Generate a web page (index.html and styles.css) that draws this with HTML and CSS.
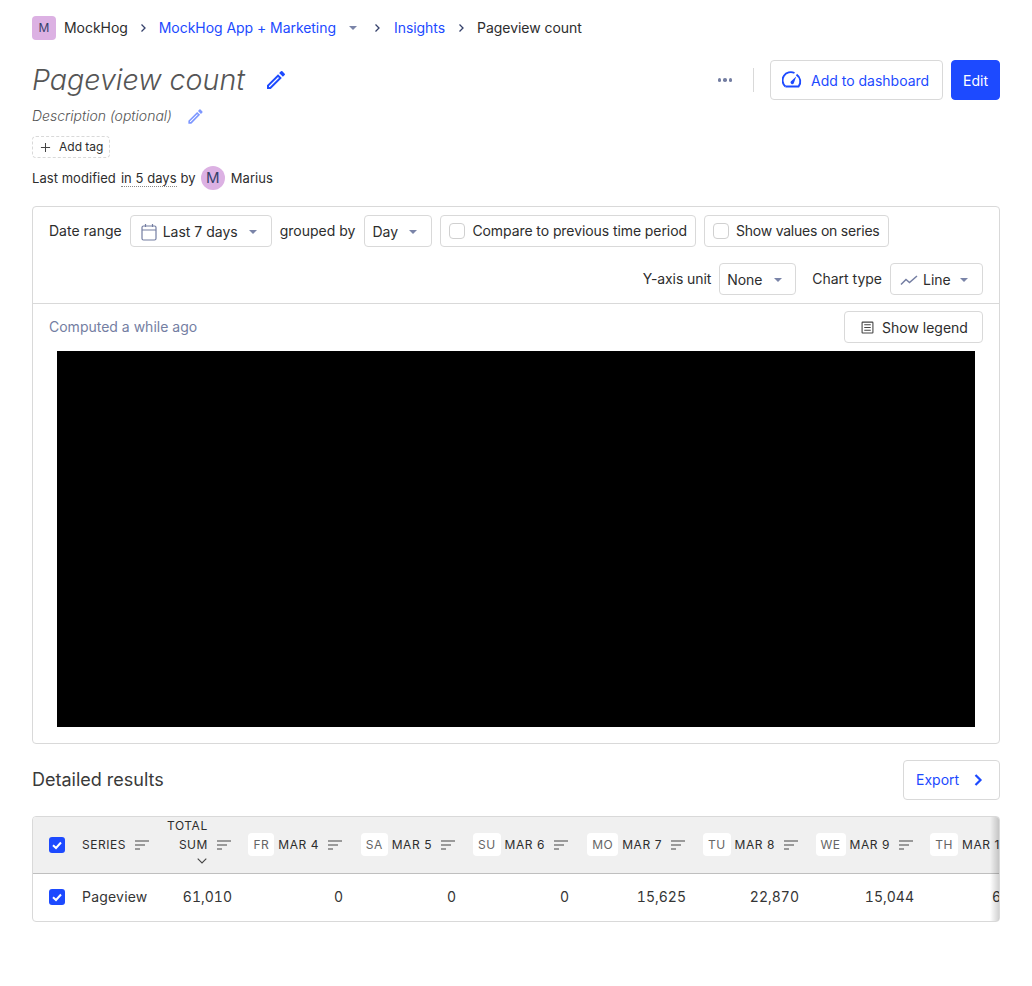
FILE: index.html
```html
<!DOCTYPE html>
<html lang="en">
<head>
<meta charset="utf-8">
<title>Pageview count</title>
<link rel="stylesheet" href="styles.css">
</head>
<body>
<nav class="crumbs">
  <span class="org-badge">M</span>
  <span class="crumb-text org-name">MockHog</span>
  <svg class="chev" viewBox="0 0 8 10"><path d="M2.500 1.500 6 5 2.500 8.500"/></svg>
  <a class="crumb-link">MockHog App + Marketing</a>
  <span class="caret project-caret"></span>
  <svg class="chev chev-wide" viewBox="0 0 8 10"><path d="M2.500 1.500 6 5 2.500 8.500"/></svg>
  <a class="crumb-link">Insights</a>
  <svg class="chev" viewBox="0 0 8 10"><path d="M2.500 1.500 6 5 2.500 8.500"/></svg>
  <span class="crumb-text">Pageview count</span>
</nav>

<header class="title-row">
  <div class="title-left">
    <h1 class="title">Pageview count</h1>
    <svg class="pencil" viewBox="0 0 24 24"><path d="M3 17.250V21h3.750L17.810 9.940l-3.750-3.750L3 17.250zM5.920 19H5v-.92l9.060-9.060.92.92L5.920 19zM20.710 7.040a1 1 0 0 0 0-1.410l-2.340-2.340a1 1 0 0 0-1.410 0l-1.830 1.830 3.750 3.750 1.830-1.830z"/></svg>
  </div>
  <div class="title-actions">
    <span class="more"><i></i><i></i><i></i></span>
    <span class="vline"></span>
    <button class="btn btn-dash">
      <svg class="gauge" viewBox="0 0 20 20"><path d="M3.400 16.500h13.200A8.200 8.200 0 0 0 14.500 4.600"/><path d="M3.400 16.500A8.200 8.200 0 0 1 12.500 3"/><path class="gauge-needle" d="M8.800 11.500 14.200 6.500 11.800 13.300a1.700 1.700 0 0 1-3-1.800z"/></svg>
      <span>Add to dashboard</span>
    </button>
    <button class="btn btn-primary">Edit</button>
  </div>
</header>

<div class="desc-row">
  <span class="desc">Description (optional)</span>
  <svg class="pencil pencil-sm" viewBox="0 0 24 24"><path d="M3 17.250V21h3.750L17.810 9.940l-3.750-3.750L3 17.250zM5.920 19H5v-.92l9.060-9.060.92.92L5.920 19zM20.710 7.040a1 1 0 0 0 0-1.410l-2.340-2.340a1 1 0 0 0-1.410 0l-1.830 1.830 3.750 3.750 1.830-1.830z"/></svg>
</div>

<div class="tag"><svg class="plus" viewBox="0 0 12 12"><path d="M6 1v10M1 6h10"/></svg>Add tag</div>

<div class="modified">
  <span>Last modified</span>
  <span class="dotted">in 5 days</span>
  <span>by</span>
  <span class="avatar">M</span>
  <span class="modified-name">Marius</span>
</div>

<section class="card">
  <div class="filters">
    <div class="filter-row">
      <span class="label">Date range</span>
      <span class="select select-date">
        <svg class="cal" viewBox="0 0 16 18"><rect x="1" y="3" width="14" height="14" rx="1.500"/><path d="M1 7h14M4.500 1v3M11.500 1v3"/></svg>
        <span>Last 7 days</span><span class="caret"></span>
      </span>
      <span class="label label-group">grouped by</span>
      <span class="select select-day"><span>Day</span><span class="caret"></span></span>
      <span class="check-btn check-compare"><span class="box"></span>Compare to previous time period</span>
      <span class="check-btn check-values"><span class="box"></span>Show values on series</span>
    </div>
    <div class="filter-row filter-row-end">
      <span class="label label-unit">Y-axis unit</span>
      <span class="select select-none"><span>None</span><span class="caret"></span></span>
      <span class="label label-gap">Chart type</span>
      <span class="select select-line">
        <svg class="linechart" viewBox="0 0 18 12"><path d="M1 10.500 6 5.500l3.500 3L17 2"/></svg>
        <span>Line</span><span class="caret"></span>
      </span>
    </div>
  </div>
  <div class="chart-area">
    <div class="chart-head">
      <span class="computed">Computed a while ago</span>
      <button class="btn-legend">
        <svg class="legend-ico" viewBox="0 0 12 12"><rect x="1" y="1" width="10" height="10" rx=".5"/><path d="M3 3.500h6M3 6h6M3 8.500h6"/></svg>
        <span>Show legend</span>
      </button>
    </div>
    <div class="chart-canvas"></div>
  </div>
</section>

<div class="results-head">
  <h2 class="results-title">Detailed results</h2>
  <button class="btn btn-export">Export<svg class="export-chev" viewBox="0 0 10 14"><path d="M2.500 2 7.500 7l-5 5"/></svg></button>
</div>

<div class="table-wrap">
  <table class="results">
    <colgroup>
      <col class="c-check"><col class="c-series"><col class="c-total"><col class="c-111"><col class="c-113"><col class="c-113"><col class="c-117"><col class="c-113"><col class="c-115"><col class="c-118">
    </colgroup>
    <thead>
      <tr>
        <th class="cell-check"><span class="checked"><svg viewBox="0 0 16 16"><path d="M4 8.200 7 11l5-5.500"/></svg></span></th>
        <th class="th-left"><span class="th-inner">SERIES<svg class="sort" viewBox="0 0 14 10"><path d="M0 1h14M0 5h10M0 9h5"/></svg></span></th>
        <th class="th-total">
          <span class="total-label">TOTAL</span>
          <span class="th-inner">SUM<svg class="sort" viewBox="0 0 14 10"><path d="M0 1h14M0 5h10M0 9h5"/></svg></span>
          <svg class="down" viewBox="0 0 10 6"><path d="M.7.700 5 5 9.300.700"/></svg>
        </th>
        <th><span class="th-inner"><span class="day">FR</span>MAR 4<svg class="sort" viewBox="0 0 14 10"><path d="M0 1h14M0 5h10M0 9h5"/></svg></span></th>
        <th><span class="th-inner"><span class="day">SA</span>MAR 5<svg class="sort" viewBox="0 0 14 10"><path d="M0 1h14M0 5h10M0 9h5"/></svg></span></th>
        <th><span class="th-inner"><span class="day">SU</span>MAR 6<svg class="sort" viewBox="0 0 14 10"><path d="M0 1h14M0 5h10M0 9h5"/></svg></span></th>
        <th><span class="th-inner"><span class="day">MO</span>MAR 7<svg class="sort" viewBox="0 0 14 10"><path d="M0 1h14M0 5h10M0 9h5"/></svg></span></th>
        <th><span class="th-inner"><span class="day">TU</span>MAR 8<svg class="sort" viewBox="0 0 14 10"><path d="M0 1h14M0 5h10M0 9h5"/></svg></span></th>
        <th><span class="th-inner"><span class="day">WE</span>MAR 9<svg class="sort" viewBox="0 0 14 10"><path d="M0 1h14M0 5h10M0 9h5"/></svg></span></th>
        <th><span class="th-inner"><span class="day">TH</span>MAR 10<svg class="sort" viewBox="0 0 14 10"><path d="M0 1h14M0 5h10M0 9h5"/></svg></span></th>
      </tr>
    </thead>
    <tbody>
      <tr>
        <td class="cell-check"><span class="checked"><svg viewBox="0 0 16 16"><path d="M4 8.200 7 11l5-5.500"/></svg></span></td>
        <td class="td-left">Pageview</td>
        <td>61,010</td><td>0</td><td>0</td><td>0</td><td>15,625</td><td>22,870</td><td>15,044</td><td>6,471</td>
      </tr>
    </tbody>
  </table>
  <div class="scroll-shadow"></div>
</div>
</body>
</html>
```

FILE: styles.css
```css
* { box-sizing: border-box; }
html, body { margin: 0; }
body {
  padding: 16px 32px 0;
  height: 986px;
  overflow: hidden;
  background: #fff;
  color: #2d2d2d;
  font-family: Inter, "Noto Sans", sans-serif;
  font-size: 14px;
  line-height: 20px;
}
svg { display: block; flex: none; }
button { font-family: inherit; white-space: nowrap; }

.crumbs { display: flex; align-items: center; height: 24px; letter-spacing: -.05px; }
.org-badge {
  width: 24px; height: 24px; border-radius: 4px;
  background: #dcb1e3; color: #35416b;
  display: flex; align-items: center; justify-content: center;
  font-size: 12px;
}
.crumb-text { color: #2d2d2d; }
.org-name { margin-left: 8px; margin-right: -1px; }
.chev { width: 8px; height: 10px; margin: 0 12px; }
.chev path { fill: none; stroke: #35416b; stroke-width: 1.300; }
.chev-wide { margin-left: 16px; margin-right: 13px; }
.crumb-link { color: #1d4aff; }
.caret {
  display: inline-block; width: 0; height: 0;
  border-left: 4px solid transparent;
  border-right: 4px solid transparent;
  border-top: 4px solid #7a84a8;
  margin-left: 11px;
}
.project-caret { margin-left: 13px; }

.title-row { display: flex; justify-content: space-between; align-items: center; margin-top: 20px; height: 40px; }
.title-left { display: flex; align-items: center; }
.title { margin: 0; font-size: 28.600px; line-height: 40px; font-weight: 300; font-style: italic; color: #555; }
.pencil { width: 24px; height: 24px; margin-left: 19px; fill: #1d4aff; }
.title-actions { display: flex; align-items: center; }
.more { display: flex; gap: 2px; margin-right: 21px; }
.more i { width: 3.500px; height: 3.500px; border-radius: 50%; background: #747ea2; }
.vline { width: 1px; height: 24px; background: #d9d9d9; margin-right: 16px; }
.btn {
  height: 40px; border-radius: 4px; border: 1px solid #d9d9d9;
  background: #fff; color: #1d4aff; font-size: 14px;
  display: inline-flex; align-items: center; padding: 0 12px;
}
.btn-dash { width: 173px; margin-right: 8px; padding-left: 11px; }
.gauge { width: 20px; height: 20px; margin-right: 9px; fill: none; stroke: #1d4aff; stroke-width: 1.900; }
.gauge-needle { fill: #1d4aff; stroke: none; }
.btn-primary { width: 49px; padding-left: 11px; background: #1d4aff; border-color: #1d4aff; color: #fff; }

.desc-row { display: flex; align-items: center; margin-top: 5px; height: 22px; }
.desc { font-style: italic; color: #555; font-weight: 300; }
.pencil-sm { width: 19px; height: 19px; margin-left: 14px; fill: #7d97ff; }

.tag {
  margin-top: 9px; width: 78px; height: 22px;
  border: 1px dashed #d9d9d9; border-radius: 4px;
  font-size: 12px; line-height: 20px; display: flex; align-items: center;
  padding-left: 7px;
}
.plus { width: 11px; height: 11px; margin-right: 8px; fill: none; stroke: #444; stroke-width: 1.100; }

.modified { display: flex; align-items: center; margin-top: 8px; height: 24px; font-size: 13px; letter-spacing: .05px; gap: 4px; white-space: nowrap; }
.dotted { margin-left: 1px; border-bottom: 1px dotted #888; line-height: 16px; }
.avatar {
  width: 24px; height: 24px; border-radius: 50%;
  background: #dcb1e3; color: #35416b; font-size: 15px;
  display: flex; align-items: center; justify-content: center;
  margin: 0 2px 0 1px;
}

.card { margin-top: 16px; border: 1px solid #d9d9d9; border-radius: 4px; height: 538px; }
.filters { padding: 8px 16px 8px; height: 97px; border-bottom: 1px solid #d9d9d9; }
.filter-row { display: flex; align-items: center; height: 32px; gap: 8px; white-space: nowrap; }
.filter-row-end { justify-content: flex-end; margin-top: 16px; }
.label { color: #2d2d2d; }
.label-group { margin-right: 1px; }
.label-unit { letter-spacing: -.1px; }
.label-gap { margin-left: 8px; }
.select {
  height: 32px; border: 1px solid #d9d9d9; border-radius: 4px;
  display: inline-flex; align-items: center; padding: 1px 14px 0 7px;
  color: #2d2d2d; background: #fff;
}
.select-date { width: 142px; padding-left: 10px; }
.cal { width: 16px; height: 18px; margin-right: 6px; fill: none; stroke: #747ea2; stroke-width: 1.200; }
.select-day { width: 68px; }
.select-none { width: 77px; }
.select-line { width: 93px; padding-left: 9px; }
.select-line .caret { margin-left: 9px; }
.linechart { width: 18px; height: 12px; margin-right: 5px; fill: none; stroke: #747ea2; stroke-width: 1.500; }
.check-btn {
  height: 32px; border: 1px solid #d9d9d9; border-radius: 4px;
  display: inline-flex; align-items: center; padding: 0 8px;
}
.check-compare { letter-spacing: -.08px; }
.check-values { letter-spacing: -.22px; }
.box { width: 16px; height: 16px; border: 1px solid #d0d0d0; border-radius: 4px; margin-right: 7px; }

.chart-area { padding: 7px 16px 0; }
.chart-head { display: flex; align-items: center; justify-content: space-between; height: 32px; }
.computed { color: #747ea2; }
.btn-legend {
  width: 139px; height: 32px; border: 1px solid #d9d9d9; border-radius: 4px;
  background: #fff; color: #2d2d2d; font-size: 14px;
  display: inline-flex; align-items: center; padding: 0 15px 0 16px;
}
.legend-ico { width: 13px; height: 13px; margin-right: 8px; fill: none; stroke: #444; stroke-width: 1; }
.chart-canvas { margin: 8px 8px 0; height: 376px; background: #000; }

.results-head { display: flex; align-items: center; justify-content: space-between; margin-top: 16px; height: 40px; }
.results-title { margin: 0; font-size: 18px; font-weight: 400; color: #3a3a3a; line-height: 40px; }
.btn-export { width: 97px; padding-left: 12px; line-height: 18px; }
.export-chev { width: 10px; height: 14px; margin-left: 14px; fill: none; stroke: #1d4aff; stroke-width: 2.200; }

.table-wrap {
  position: relative; margin-top: 16px; height: 106px;
  border: 1px solid #d9d9d9; border-radius: 4px; overflow: hidden;
}
.results { border-collapse: collapse; table-layout: fixed; width: 1007px; }
.c-check { width: 41px; }
.c-series { width: 85px; }
.c-total { width: 81px; }
.c-111 { width: 111px; }
.c-113 { width: 113px; }
.c-117 { width: 117px; }
.c-115 { width: 115px; }
.c-118 { width: 118px; }
.results th {
  background: #f0f0f0; height: 56px; padding: 0 8px;
  border-bottom: 1px solid #bfbfbf;
  font-size: 12px; font-weight: 400; line-height: 18px; letter-spacing: .55px;
  color: #2d2d2d; text-align: right; white-space: nowrap;
}
.results td { height: 47px; padding: 0 8px; text-align: right; white-space: nowrap; color: #353535; font-variant-numeric: tabular-nums; }
.results .cell-check { padding: 0 0 0 16px; text-align: left; }
.results .td-left { text-align: left; letter-spacing: .2px; }
.results .th-left { text-align: left; }
.th-inner { display: flex; align-items: center; justify-content: flex-end; }
.th-left .th-inner { justify-content: flex-start; }
.sort { width: 14px; height: 10px; margin-left: 9px; margin-right: 1px; fill: none; stroke: #444; stroke-width: 1.100; }
.day {
  background: #fff; border-radius: 4px; height: 23px; padding: 0 5px;
  display: inline-flex; align-items: center; color: #666; margin-right: 4px; letter-spacing: .5px;
}
.results .th-total { vertical-align: top; text-align: center; }
.total-label { display: block; text-align: left; margin-bottom: 1px; }
.down { width: 10px; height: 6px; margin: 4px 0 0 30px; fill: none; stroke: #444; stroke-width: 1.100; }
.checked { display: block; width: 16px; height: 16px; border-radius: 3px; background: #1d4aff; }
.checked svg { width: 16px; height: 16px; fill: none; stroke: #fff; stroke-width: 2; }
.scroll-shadow {
  position: absolute; top: 0; right: 0; bottom: 0; width: 9px;
  background: linear-gradient(to right, rgba(0,0,0,0), rgba(0,0,0,.18));
}
```
